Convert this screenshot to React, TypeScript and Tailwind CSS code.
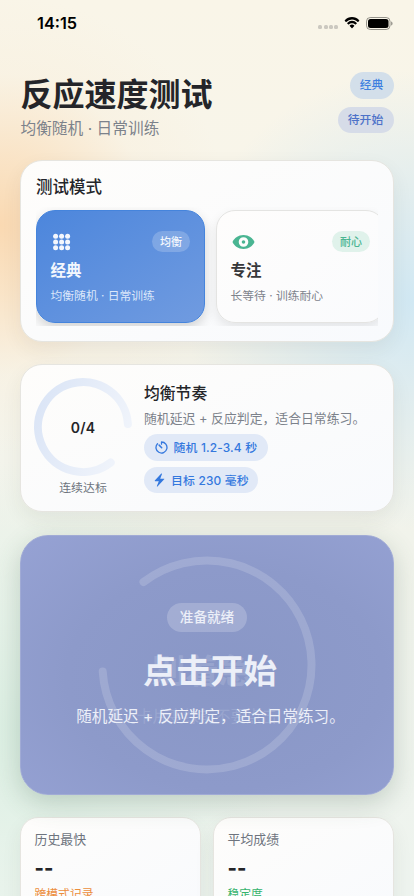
import type { ReactNode } from "react";

interface Mode {
  name: string;
  desc: string;
  tag: string;
  active: boolean;
}

interface Stat {
  label: string;
  value: string;
  note: string;
  noteClass: string;
}

const modes: Mode[] = [
  { name: "经典", desc: "均衡随机 · 日常训练", tag: "均衡", active: true },
  { name: "专注", desc: "长等待 · 训练耐心", tag: "耐心", active: false },
];

const stats: Stat[] = [
  { label: "历史最快", value: "--", note: "跨模式记录", noteClass: "text-[#ec8e3c]" },
  { label: "平均成绩", value: "--", note: "稳定度", noteClass: "text-[#35b36c]" },
];

function StatusBar() {
  return (
    <div className="flex h-[46px] items-center justify-between pr-[21px] pl-[37px]">
      <span className="text-[16.3px] leading-none font-semibold text-black">14:15</span>
      <div className="flex items-center">
        <div className="mt-[8px] mr-[6px] flex gap-[1.2px]">
          {[0, 1, 2, 3].map((n) => (
            <i key={n} className="size-[4px] rounded-[1.5px] bg-[#cbc8c0]" />
          ))}
        </div>
        <svg width="16" height="12" viewBox="0 0 17 12" className="mr-[6px]" preserveAspectRatio="none">
          <path d="M8.5 2.4c2.3 0 4.5.9 6.1 2.5.1.1.3.1.4 0l1.2-1.2c.1-.1.1-.3 0-.5a11 11 0 0 0-15.4 0c-.1.2-.1.4 0 .5L2 4.9c.1.1.3.1.4 0a8.8 8.8 0 0 1 6.1-2.5Z" />
          <path d="M8.5 6.3c1.3 0 2.5.5 3.4 1.3.1.1.3.1.5 0l1.2-1.2c.1-.1.1-.3 0-.5a7.4 7.4 0 0 0-10.2 0c-.1.2-.1.4 0 .5l1.2 1.2c.2.1.4.1.5 0 .9-.8 2.1-1.3 3.4-1.3Z" />
          <path d="M10.9 9c.1-.1.1-.3 0-.4a3.7 3.7 0 0 0-4.8 0c-.1.1-.1.3 0 .4l2.2 2.2c.1.1.3.1.4 0L10.9 9Z" />
        </svg>
        <svg width="27" height="13" viewBox="0 0 27 13">
          <rect x=".5" y=".5" width="23.5" height="12" rx="3.8" fill="none" stroke="#000" strokeOpacity=".4" />
          <rect x="2" y="2" width="20.5" height="9" rx="2.5" />
          <path d="M25.2 4.5v4c.8-.3 1.3-1.1 1.3-2s-.5-1.7-1.3-2Z" opacity=".45" />
        </svg>
      </div>
    </div>
  );
}

function Card({ className, children }: { className: string; children: ReactNode }) {
  return (
    <section
      className={`border border-[#e6e5e0] bg-linear-to-br from-[#fefdfb] to-[#f8fafd] shadow-[0_8px_20px_rgba(60,60,40,0.07)] ${className}`}
    >
      {children}
    </section>
  );
}

function GridIcon() {
  return (
    <svg width="20" height="18" viewBox="0 0 20 18" fill="#f4f7fd">
      {[4.6, 10.6, 16.6].map((x) =>
        [3.3, 9, 14.7].map((y) => <circle key={`${x}-${y}`} cx={x} cy={y} r="2.5" />)
      )}
    </svg>
  );
}

function EyeIcon() {
  return (
    <svg width="24" height="18" viewBox="0 0 24 18">
      <path d="M1.500 9C3.300 5 7.300 2 12.500 2s9.200 3 11 7c-1.800 4-5.800 7-11 7S3.300 13 1.500 9Z" fill="#4ab592" />
      <circle cx="12.5" cy="9" r="3.3" fill="none" stroke="#fdfdfc" strokeWidth="3" />
    </svg>
  );
}

function TimerIcon() {
  return (
    <svg width="13" height="13" viewBox="0 0 13 13" fill="none" stroke="#3478de" strokeWidth="1.3" strokeLinecap="round">
      <path d="M6.5 1v2.2M6.5 1A5.5 5.5 0 1 1 2.5 2.7" />
      <path d="M4.1 4.1 6.7 6.7" strokeWidth="1.5" />
    </svg>
  );
}

function BoltIcon() {
  return (
    <svg width="11" height="14" viewBox="0 0 11 14" fill="#3478de">
      <path d="M7.3.6.8 7.6c-.2.3-.1.6.3.6h3.7l-1.9 4.9c-.2.5.3.7.6.4l6.7-7.2c.3-.3.1-.6-.2-.6H6.2L8 1c.2-.5-.4-.8-.7-.4Z" />
    </svg>
  );
}

function ModeTile({ mode }: { mode: Mode }) {
  return (
    <div
      className={`flex h-[113px] w-[168.5px] shrink-0 flex-col rounded-[19px] border px-[13.5px] pt-[20px] ${
        mode.active
          ? "border-[#4584dc] bg-linear-to-br from-[#4c86dc] to-[#709be0] text-[#f3f7fd] shadow-[0_5px_12px_rgba(0,0,0,0.16)]"
          : "border-[#e4e4e2] bg-linear-to-br from-[#fefdfc] to-[#fafbfd] text-[#36373a] shadow-[0_5px_12px_rgba(0,0,0,0.09)]"
      }`}
    >
      <div className="flex h-[21px] items-center justify-between">
        {mode.active ? <GridIcon /> : <EyeIcon />}
        <span
          className={`flex h-[21px] w-[38px] items-center justify-center rounded-full pt-px text-[11px] font-medium ${
            mode.active ? "bg-white/20" : "bg-[#e0f2eb] text-[#4ab592]"
          }`}
        >
          {mode.tag}
        </span>
      </div>
      <div className="mt-[9px] text-[15.5px] leading-[20px] font-bold">{mode.name}</div>
      <div className={`mt-[6px] text-[11.8px] leading-[18px] ${mode.active ? "text-[#dbe7fa]" : "text-[#7e838c]"}`}>
        {mode.desc}
      </div>
    </div>
  );
}

export default function App() {
  return (
    <div className="h-[896px] w-full overflow-hidden bg-[radial-gradient(circle_at_0px_225px,#fad9b2_0px,#fae0bfcc_70px,#f9eedb66_150px,transparent_230px),radial-gradient(circle_at_414px_300px,#d1e8f3_0px,#d9eaf0bb_100px,transparent_230px),radial-gradient(circle_at_20px_730px,#dcefe3_0px,#e3f2e8bb_120px,transparent_270px),linear-gradient(180deg,#f9f5e8_0%,#f7f5eb_35%,#f1f3eb_60%,#eef4ef_100%)] font-['Inter','Noto_Sans_CJK_SC',sans-serif] text-[#242529]">
      <StatusBar />

      <header className="flex h-[114px] justify-between px-[20.5px] pt-[26px]">
        <div>
          <h1 className="pt-[2px] text-[32px] leading-[42px] font-bold">反应速度测试</h1>
          <p className="mt-[2px] text-[15.7px] leading-[22px] text-[#7c828b]">均衡随机 · 日常训练</p>
        </div>
        <div className="flex flex-col items-end gap-[8px] text-[11.8px] font-medium">
          <span className="flex h-[27px] w-[44px] items-center justify-center rounded-full bg-[#d3dfea] pt-px text-[#3f7fe0]">
            经典
          </span>
          <span className="flex h-[26px] w-[56px] items-center justify-center rounded-full bg-[#d6dce8] pt-[2px] text-[#4d72c8]">
            待开始
          </span>
        </div>
      </header>

      <main className="px-[20px]">
        <Card className="h-[182px] rounded-[22px] px-[15px] pt-[15px]">
          <h2 className="text-[16.5px] leading-[22px] font-medium">测试模式</h2>
          <div className="mt-[9px] flex h-[119px] gap-[11.5px] overflow-hidden pt-[3px]">
            {modes.map((mode) => (
              <ModeTile key={mode.name} mode={mode} />
            ))}
          </div>
        </Card>

        <Card className="mt-[22px] flex h-[148px] rounded-[22px] pl-[13px]">
          <div className="flex w-[98px] flex-col items-center pt-[13px]">
            <div className="grid size-[98px] place-items-center">
              <svg width="98" height="98" viewBox="0 0 98 98" className="col-start-1 row-start-1">
                <defs>
                  <linearGradient id="streak" x1="0" x2="1" y1="0.2" y2="0.6">
                    <stop offset="0" stopColor="#dbe5f6" />
                    <stop offset="1" stopColor="#f0f4fb" />
                  </linearGradient>
                </defs>
                <path
                  d="M76.7 84.5A45 45 0 1 1 93.9 45.9"
                  fill="none"
                  stroke="url(#streak)"
                  strokeWidth="8"
                  strokeLinecap="round"
                />
              </svg>
              <span className="col-start-1 row-start-1 text-[14px] font-semibold tracking-[0.2px]">0/4</span>
            </div>
            <span className="mt-[3px] text-[11.9px] leading-[18px] text-[#6e747e]">连续达标</span>
          </div>
          <div className="pt-[18px] pl-[12px]">
            <h2 className="text-[15.8px] leading-[22px] font-medium">均衡节奏</h2>
            <p className="mt-[4px] text-[12.85px] leading-[20px] whitespace-nowrap text-[#7c828b]">
              随机延迟 + 反应判定，适合日常练习。
            </p>
            <div className="mt-[5px] flex flex-col items-start gap-[6px] text-[11.9px] font-medium text-[#3478de]">
              <span className="flex h-[27px] w-[124px] items-center gap-[6px] rounded-full bg-[#e1e9f7] pl-[10.5px] whitespace-nowrap">
                <TimerIcon />
                <span className="pt-px tracking-[0.15px]">随机 1.2-3.4 秒</span>
              </span>
              <span className="flex h-[26px] w-[114px] items-center gap-[6px] rounded-full bg-[#e1e9f7] pl-[10px] whitespace-nowrap">
                <BoltIcon />
                <span className="pt-[2px] tracking-[0.15px]">目标 230 毫秒</span>
              </span>
            </div>
          </div>
        </Card>

        <button className="relative mt-[22.5px] flex h-[260px] w-full flex-col items-center rounded-[28px] border border-[#a1abd5] bg-[radial-gradient(ellipse_at_55%_55%,#8997c6_0%,#8d9aca_55%,#96a2d4_100%)] pt-[67.5px] text-[#eceff8] shadow-[0_8px_26px_rgba(60,90,70,0.24)]">
          <svg width="220" height="220" viewBox="-110 -110 220 220" className="absolute top-[19px] left-1/2 -translate-x-1/2">
            <path
              d="M-63.5-83A104.5 104.5 0 1 1-104.3 6.5"
              fill="none"
              stroke="#fff"
              strokeOpacity=".16"
              strokeWidth="8"
              strokeLinecap="round"
            />
          </svg>
          <span className="relative flex h-[29px] w-[80px] items-center justify-center rounded-full bg-white/20 text-[13.6px] font-medium">
            准备就绪
          </span>
          {/* outgoing prompt is still fading out below the new one */}
          <span className="relative mt-[17px] grid place-items-center text-[33.5px] leading-[44px] font-bold whitespace-nowrap">
            <span className="col-start-1 row-start-1 pr-[10px] opacity-15">别着急</span>
            <span className="col-start-1 row-start-1 pl-[6px]">点击开始</span>
          </span>
          <span className="relative mt-[13px] grid place-items-center text-[15.6px] leading-[22px] whitespace-nowrap">
            <span className="col-start-1 row-start-1 opacity-15">卡片变绿前不要点击</span>
            <span className="col-start-1 row-start-1 pl-[7px]">随机延迟 + 反应判定，适合日常练习。</span>
          </span>
        </button>

        <div className="mt-[22px] grid grid-cols-2 gap-[12px]">
          {stats.map((stat) => (
            <Card key={stat.label} className="h-[110px] rounded-[18px] px-[13.5px] pt-[12px]">
              <div className="text-[12.9px] leading-[20px] text-[#6e747e]">{stat.label}</div>
              <div className="mt-[4px] text-[20px] leading-[28px] font-extrabold">{stat.value}</div>
              <div className={`mt-[3px] text-[11.8px] leading-[18px] ${stat.noteClass}`}>{stat.note}</div>
            </Card>
          ))}
        </div>
      </main>
    </div>
  );
}
